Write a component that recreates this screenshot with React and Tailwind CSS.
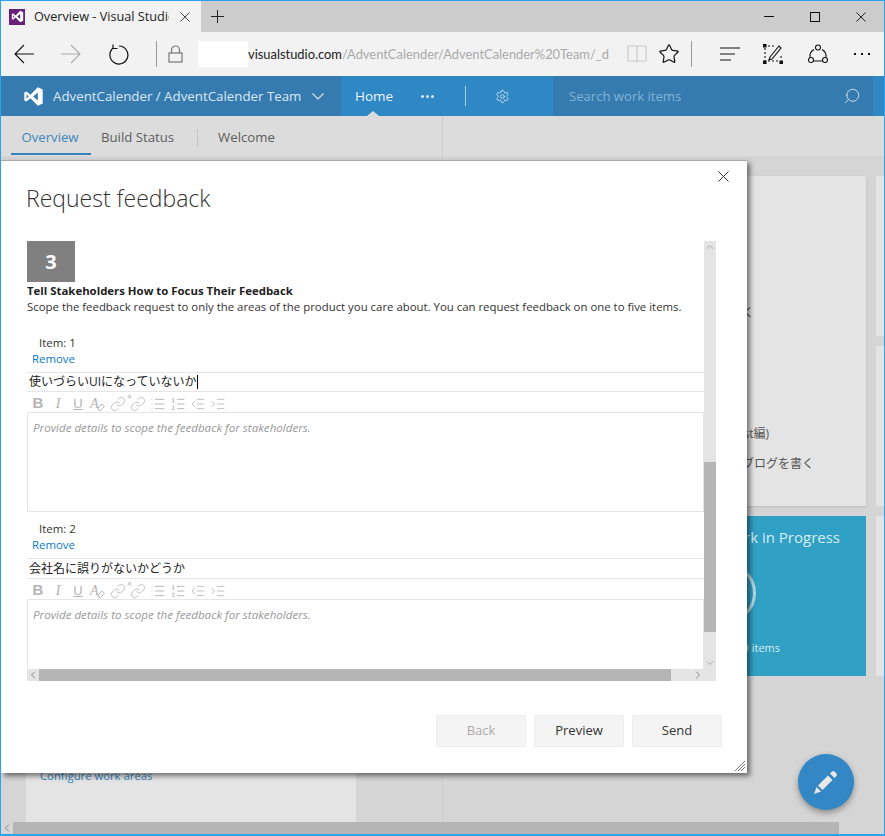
import React from "react";
import { Link, List, ListOrdered, IndentDecrease, IndentIncrease, ChevronUp, ChevronDown, ChevronLeft, ChevronRight, Settings, Search, Star } from "lucide-react";

const font = "font-['Open_Sans','Noto_Sans_CJK_JP',sans-serif]";

function VsLogo({ size = 16, color = "#fff" }) {
  return (
    <svg width={size} height={size} viewBox="0 0 24 24" fill={color}>
      <path d="M17 1.500 22.500 4v16L17 22.500 8.500 14 3.800 17.800 1.500 16.500V7.500L3.800 6.200 8.500 10ZM17 7.500 11.500 12 17 16.500ZM4 9.500V14.500L6.500 12Z" fillRule="evenodd" />
    </svg>
  );
}

function Cross({ size = 11, color = "#222", className = "" }) {
  return (
    <svg className={className} width={size} height={size} viewBox="0 0 11 11" stroke={color} strokeWidth="1" fill="none">
      <path d="M0.500 0.500 10.500 10.500M10.500 0.500 0.500 10.500" />
    </svg>
  );
}

function BrowserBar() {
  return (
    <div className="shrink-0">
      <div className="flex h-[31px] bg-[#cccccc]">
        <div className="flex w-[200px] items-center bg-[#f2f2f2] pl-2">
          <div className="flex h-4 w-4 items-center justify-center bg-[#68217a]">
            <VsLogo size={13} />
          </div>
          <span className="ml-[9px] w-[135px] overflow-hidden text-[12.700px] whitespace-nowrap text-[#222]">Overview - Visual Studio</span>
          <Cross className="ml-[11px]" size={10} color="#333" />
        </div>
        <svg className="mt-[9px] ml-[10px]" width="13" height="13" viewBox="0 0 13 13" stroke="#222" strokeWidth="1"><path d="M6.500 0V13M0 6.500H13" /></svg>
        <div className="ml-auto flex items-center pr-[18px]">
          <div className="h-px w-[10px] bg-[#111]" />
          <div className="ml-[36px] h-[10px] w-[10px] border border-[#111]" />
          <Cross className="ml-[36px]" size={10} color="#111" />
        </div>
      </div>
      <div className="flex h-[44px] items-center bg-[#f2f2f2]">
        <svg className="ml-[13px]" width="20" height="20" viewBox="0 0 20 20" fill="none" stroke="#111" strokeWidth="1.100"><path d="M1 10H20M10 1 1 10l9 9" /></svg>
        <svg className="ml-[27px]" width="20" height="20" viewBox="0 0 20 20" fill="none" stroke="#aaa" strokeWidth="1.100"><path d="M0 10H19M10 1l9 9-9 9" /></svg>
        <svg className="ml-[27px]" width="21" height="21" viewBox="0 0 21 21" fill="none" stroke="#111" strokeWidth="1.200">
          <path d="M11 2A9 9 0 1 1 5.500 3.800M5 0.500V4.500H9.500" />
        </svg>
        <div className="ml-[27px] h-[26px] w-px bg-[#999]" />
        <svg className="ml-[11px]" width="15" height="18" viewBox="0 0 15 18" fill="none" stroke="#777" strokeWidth="1.200">
          <rect x="1" y="8" width="13" height="9" /><path d="M3.500 8V5a4 4 0 0 1 8 0V8" />
        </svg>
        <div className="ml-[15px] h-[26px] w-[50px] bg-white" />
        <div className="w-[361px] overflow-hidden font-['Lato',sans-serif] text-[12.900px] leading-[26px] whitespace-nowrap text-[#aaaaaa]">
          <span className="text-[#222]">visualstudio.com</span>/AdventCalender/AdventCalender%20Team/_d
        </div>
        <svg className="ml-[18px]" width="20" height="18" viewBox="0 0 20 18" fill="none" stroke="#ccc" strokeWidth="1.200"><path d="M1 1h8l1 1 1-1h8v15h-8l-1 1-1-1H1ZM10 2v14" /></svg>
        <Star className="ml-[11px] h-[22px] w-[22px] text-[#111]" strokeWidth={1.300} />
        <div className="ml-[11px] h-[26px] w-px bg-[#999]" />
        <svg className="ml-[28px]" width="20" height="14" viewBox="0 0 20 14" stroke="#111" strokeWidth="1.200"><path d="M0 1h20M0 7h15M0 13h11" /></svg>
        <svg className="ml-[23px]" width="20" height="20" viewBox="0 0 20 20" fill="none" stroke="#111" strokeWidth="1.100">
          <path d="M2 4v13h14M5 2h8M18 12v3" strokeDasharray="2 2" />
          <path d="M7 13 16 2l2 2-9 11-3 1Z" />
          <path d="M0 0h3v3H0ZM0 17h3v3H0ZM17 17h3v3h-3Z" fill="#111" />
        </svg>
        <svg className="ml-[25px]" width="20" height="20" viewBox="0 0 20 20" fill="none" stroke="#111" strokeWidth="1.100">
          <circle cx="10" cy="3.500" r="2.500" /><circle cx="3" cy="16" r="2.500" /><circle cx="17" cy="16" r="2.500" />
          <path d="M6 5.500A8 8 0 0 0 2 13.500M14 5.500A8 8 0 0 1 18 13.500M5.500 17h9" />
        </svg>
        <div className="ml-[26px] flex gap-[5px]">
          <div className="h-[2px] w-[2px] bg-[#111]" />
          <div className="h-[2px] w-[2px] bg-[#111]" />
          <div className="h-[2px] w-[2px] bg-[#111]" />
        </div>
      </div>
    </div>
  );
}

function TopNav() {
  return (
    <div className="flex h-10 shrink-0 bg-[#2f87c3] text-white">
      <div className="flex w-[340px] items-center bg-[#367bb0] pl-[22px]">
        <VsLogo size={21} />
        <span className="ml-[9px] pt-[2px] text-[13.300px] text-[#dbe8f2]">AdventCalender / AdventCalender Team</span>
        <svg className="ml-[11px]" width="12" height="7" viewBox="0 0 12 7" fill="none" stroke="#dbe8f2" strokeWidth="1.100"><path d="M0.500 0.500 6 6l5.500-5.500" /></svg>
      </div>
      <div className="relative flex w-[212px] items-center">
        <span className="ml-[14px] text-[13.500px] text-[#eef5fa]">Home</span>
        <div className="ml-[28px] flex gap-[2px]">
          <div className="h-[3px] w-[3px] rounded-full bg-[#dbe8f2]" />
          <div className="h-[3px] w-[3px] rounded-full bg-[#dbe8f2]" />
          <div className="h-[3px] w-[3px] rounded-full bg-[#dbe8f2]" />
        </div>
        <div className="ml-[31px] h-[20px] w-px bg-[#a9cde6]" />
        <Settings className="ml-[29px] h-[15px] w-[15px] text-[#dbe8f2]" strokeWidth={1.300} />
        <div className="absolute bottom-0 left-[26px] h-0 w-0 border-x-[6px] border-b-[5px] border-x-transparent border-b-[#dcdcdc]" />
      </div>
      <div className="flex w-[320px] items-center bg-[#367bb0] pl-[16px]">
        <span className="pt-[1px] text-[13.100px] text-[#82b3d6]">Search work items</span>
        <Search className="mr-[12px] ml-auto h-[18px] w-[18px] -scale-x-100 text-[#dbe8f2]" strokeWidth={1.200} />
      </div>
    </div>
  );
}

function SubTabs() {
  return (
    <div className="flex h-10 shrink-0 bg-[#dcdcdc]">
      <div className="flex w-[442px] items-center border-r border-[#cccccc] pt-[3px] text-[13.200px]">
        <div className="-mt-[3px] ml-[10px] flex h-[39px] w-[80px] items-center justify-center self-start border-b-[2px] border-[#3583bd] pt-[7px] pr-[2px] text-[#3f86bd]">Overview</div>
        <span className="ml-[10px] text-[#5c5c5c]">Build Status</span>
        <div className="ml-[23px] h-[18px] w-px bg-[#c4c4c4]" />
        <span className="ml-[20px] text-[#5c5c5c]">Welcome</span>
      </div>
    </div>
  );
}

function Backdrop() {
  return (
    <div className="flex min-h-0 flex-1 bg-[#d5d5d5]">
      <div className="flex w-[442px] shrink-0 border-r border-[#cccccc] pt-5 pl-[25px]">
        <div className="flex h-full w-[330px] flex-col justify-end bg-[#e4e4e4] pb-[37px] pl-[14px] text-[11.300px] text-[#3583bd]">
          Configure work areas
        </div>
      </div>
      <div className="flex flex-1 gap-[10px] pt-5 pl-[10px]">
        <div className="flex w-[413px] shrink-0 flex-col gap-[10px]">
          <div className="flex h-[330px] flex-col items-end bg-[#e4e4e4] pr-[52px] text-[12px] text-[#555] shadow-sm">
            <span className="mt-[128px] mr-[60px]">く</span>
            <span className="mt-[103px] mr-[45px]">st編)</span>
            <span className="mt-[12px]">ブログを書く</span>
          </div>
          <div className="flex h-[160px] flex-col items-end bg-[#30a0c4] pr-[26px] text-[#d7edf4]">
            <span className="mt-[10px] text-[15px]">Work in Progress</span>
            <div className="mt-[14px] mr-[84px] h-[60px] w-[60px] rounded-full border-[3px] border-[#b5d7e2]" />
            <span className="mt-[17px] mr-[60px] text-[11px]">0 items</span>
          </div>
        </div>
        <div className="flex flex-1 flex-col gap-[10px]">
          <div className="h-[160px] bg-[#e4e4e4]" />
          <div className="h-[160px] bg-[#e4e4e4]" />
          <div className="h-[160px] bg-[#e4e4e4]" />
        </div>
      </div>
    </div>
  );
}

function Toolbar() {
  const icon = "h-[16px] w-[16px] text-[#b4b4b4]";
  return (
    <div className="flex h-[20px] items-center gap-[4px] pt-[3px] pl-[3px] text-[#b4b4b4]">
      <span className="w-[16px] text-center font-['Liberation_Sans',sans-serif] text-[15px] font-bold">B</span>
      <span className="w-[16px] text-center font-['Liberation_Serif',serif] text-[15px] italic">I</span>
      <span className="w-[16px] text-center font-['Liberation_Sans',sans-serif] text-[13px] underline">U</span>
      <span className="flex w-[16px] items-end font-['Liberation_Serif',serif] text-[14px] italic">
        A
        <svg className="-ml-[2px] mb-[3px]" width="8" height="8" viewBox="0 0 8 8" fill="none" stroke="#b4b4b4"><path d="M1 5 5 1l2.500 2.500-4 4H2Z" /></svg>
      </span>
      <Link className={icon} strokeWidth={1.200} />
      <span className="relative">
        <Link className={icon} strokeWidth={1.200} />
        <span className="absolute -top-[4px] -left-[3px] text-[9px] leading-[10px] text-[#b4b4b4]">×</span>
      </span>
      <List className={icon} strokeWidth={1.400} />
      <ListOrdered className={icon} strokeWidth={1.400} />
      <IndentDecrease className={icon} strokeWidth={1.200} />
      <IndentIncrease className={icon} strokeWidth={1.200} />
    </div>
  );
}

function FeedbackItem({ index, value, caret, tall }) {
  return (
    <div>
      <div className="h-[16px] pl-[12px] text-[11.400px] leading-[16px] text-[#333]">Item: {index}</div>
      <div className="h-[16px] pl-[5px] text-[11.400px] leading-[16px] text-[#0a78c8]">Remove</div>
      <div className={`mt-[5px] flex items-center border-y border-[#e6e6e6] pl-[2px] text-[12px] text-[#222] ${tall ? "h-[21px]" : "h-[20px]"}`}>
        {value}
        {caret && <span className="h-[14px] w-px bg-black" />}
      </div>
      <Toolbar />
      <div className="h-[100px] border border-[#e6e6e6] pt-[6px] pl-[5px] text-[11.600px] text-[#999] italic">
        Provide details to scope the feedback for stakeholders.
      </div>
    </div>
  );
}

function FeedbackDialog() {
  return (
    <div className="absolute top-[159px] left-0 flex h-[613px] w-[746px] flex-col border-t border-[#aaaaaa] bg-white shadow-[3px_3px_5px_rgba(0,0,0,0.5)]">
      <Cross className="absolute top-[10px] right-[18px]" size={11} color="#333" />
      <h1 className="mt-[21px] ml-[25px] text-[23px] leading-[32px] font-light text-[#333]">Request feedback</h1>
      <div className="mt-[27px] ml-[26px] flex h-[440px] w-[689px] flex-col">
        <div className="flex min-h-0 flex-1">
          <div className="min-w-0 flex-1 overflow-hidden">
            <div className="flex h-[41px] w-[48px] items-center justify-center bg-[#808080] pt-[1px] text-[20px] font-bold text-white">3</div>
            <div className="mt-[1px] text-[11.400px] leading-[16px] font-bold text-[#222]">Tell Stakeholders How to Focus Their Feedback</div>
            <div className="text-[11.400px] leading-[16px] whitespace-nowrap text-[#333]">Scope the feedback request to only the areas of the product you care about. You can request feedback on one to five items.</div>
            <div className="mt-[20px] flex flex-col gap-[9px]">
              <FeedbackItem index={1} value="使いづらいUIになっていないか" caret />
              <FeedbackItem index={2} value="会社名に誤りがないかどうか" tall />
            </div>
          </div>
          <div className="flex w-[12px] flex-col items-center bg-[#e4e4e4] text-[#aaa]">
            <ChevronUp className="h-[12px] w-[12px]" />
            <div className="mt-[209px] h-[170px] w-full bg-[#b5b5b5]" />
            <ChevronDown className="mt-auto h-[12px] w-[12px]" />
          </div>
        </div>
        <div className="flex h-[12px] items-center bg-[#e4e4e4] text-[#888]">
          <ChevronLeft className="h-[12px] w-[12px]" />
          <div className="h-full w-[632px] bg-[#b5b5b5]" />
          <ChevronRight className="ml-[21px] h-[12px] w-[12px]" />
        </div>
      </div>
      <div className="mt-[34px] flex justify-end gap-[8px] pr-[25px] text-[13px]">
        <button className="h-[32px] w-[90px] border border-[#eeeeee] bg-[#f4f4f4] text-[#aaaaaa]">Back</button>
        <button className="h-[32px] w-[90px] border border-[#eeeeee] bg-[#f4f4f4] text-[#333]">Preview</button>
        <button className="h-[32px] w-[90px] border border-[#eeeeee] bg-[#f4f4f4] text-[#333]">Send</button>
      </div>
      <svg className="absolute right-[2px] bottom-[2px]" width="10" height="10" viewBox="0 0 10 10" stroke="#777" strokeWidth="1"><path d="M0 10 10 0M3 10 10 3M6 10 10 6" /></svg>
    </div>
  );
}

export default function App() {
  return (
    <div className={`relative flex h-[836px] w-[885px] flex-col overflow-hidden border border-b-2 border-[#29a3f0] ${font}`}>
      <BrowserBar />
      <TopNav />
      <SubTabs />
      <Backdrop />
      <div className="flex h-[12px] shrink-0 items-center bg-[#d5d5d5] text-[#888]">
        <ChevronLeft className="h-[12px] w-[12px]" />
        <div className="h-full w-[826px] bg-[#b5b5b5]" />
      </div>
      <FeedbackDialog />
      <div className="absolute top-[753px] left-[797px] flex h-[56px] w-[56px] items-center justify-center rounded-full bg-[#3387c4] shadow-[0_3px_6px_rgba(0,0,0,0.35)]">
        <svg width="26" height="26" viewBox="0 0 26 26" fill="#e8e8e8">
          <path d="M1 25 3.500 18 8 22.500ZM5 16.500 15 6.500 19.500 11 9.500 21ZM17 4.500 19 2.500a2 2 0 0 1 2.500 0l2 2a2 2 0 0 1 0 2.500L21.500 9Z" />
        </svg>
      </div>
    </div>
  );
}
